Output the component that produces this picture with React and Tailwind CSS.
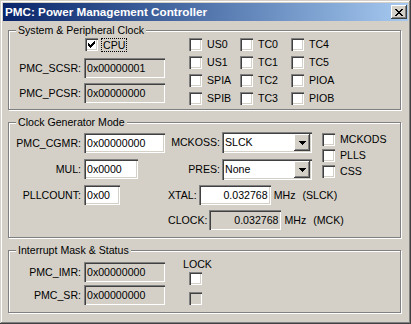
import React from "react";

const SUNKEN =
  "shadow-[inset_1px_1px_0_#808080,inset_2px_2px_0_#404040,inset_-1px_-1px_0_#ffffff,inset_-2px_-2px_0_#d4d0c8]";
const RAISED =
  "shadow-[inset_-1px_-1px_0_#404040,inset_1px_1px_0_#ffffff,inset_-2px_-2px_0_#808080,inset_2px_2px_0_#d4d0c8]";

function CheckMark() {
  return (
    <svg width="7" height="7" viewBox="0 0 7 7" shapeRendering="crispEdges">
      <path
        fill="#000"
        d="M6 0h1v1h-1z M5 1h2v1h-2z M0 2h1v1h-1z M4 2h3v1h-3z M0 3h2v1h-2z M3 3h3v1h-3z M0 4h5v1h-5z M1 5h3v1h-3z M2 6h1v1h-1z"
      />
    </svg>
  );
}

function Check({ checked, disabled }) {
  return (
    <div
      className={`w-[13px] h-[13px] shrink-0 flex items-center justify-center ${SUNKEN} ${
        disabled ? "bg-[#d4d0c8]" : "bg-white"
      }`}
    >
      {checked && <CheckMark />}
    </div>
  );
}

function Field({ w, value, ro, right }) {
  return (
    <div
      className={`${w} h-[20px] shrink-0 flex items-center ${SUNKEN} ${
        ro ? "bg-[#d4d0c8]" : "bg-white"
      } ${right ? "justify-end pr-[3px]" : "pl-[3px]"}`}
    >
      <span className="leading-[13px]">{value}</span>
    </div>
  );
}

function Combo({ value }) {
  return (
    <div className={`w-[90px] h-[21px] shrink-0 bg-white flex items-center pl-[3px] pr-[2px] ${SUNKEN}`}>
      <span className="flex-1 leading-[13px]">{value}</span>
      <div className={`w-[16px] h-[17px] bg-[#d4d0c8] flex items-center justify-center ${RAISED}`}>
        <svg width="7" height="4" viewBox="0 0 7 4" shapeRendering="crispEdges">
          <path fill="#000" d="M0 0h7v1h-7z M1 1h5v1h-5z M2 2h3v1h-3z M3 3h1v1h-1z" />
        </svg>
      </div>
    </div>
  );
}

function CheckItem({ label }) {
  return (
    <div className="h-[13px] flex items-center">
      <Check />
      <span className="ml-[5px] leading-[13px] whitespace-nowrap">{label}</span>
    </div>
  );
}

function Group({ title, h, children }) {
  return (
    <div
      className={`relative ml-[5px] w-[393px] ${h} border border-[#808080] shadow-[inset_1px_1px_0_#ffffff,1px_1px_0_#ffffff]`}
    >
      <span className="absolute left-[7px] top-[-7px] px-[2px] bg-[#d4d0c8] leading-[13px] whitespace-nowrap">
        {title}
      </span>
      {children}
    </div>
  );
}

function LabeledField({ label, labelW, gap, children }) {
  return (
    <div className="h-[20px] flex items-center">
      <span className={`${labelW} ${gap} text-right leading-[13px] whitespace-nowrap`}>{label}</span>
      {children}
    </div>
  );
}

export default function App() {
  return (
    <div
      className={`w-[411px] h-[324px] bg-[#d4d0c8] p-[3px] text-black text-[10.6px] font-['Liberation_Sans',Arial,sans-serif] shadow-[inset_-1px_-1px_0_#404040,inset_1px_1px_0_#d4d0c8,inset_-2px_-2px_0_#808080,inset_2px_2px_0_#ffffff] overflow-hidden`}
    >
      {/* Title bar */}
      <div className="h-[18px] flex items-center pl-[2px] bg-linear-to-r from-[#0a246a] to-[#a6caf0]">
        <span className="text-white font-bold text-[11.7px] leading-[14px] whitespace-nowrap">
          PMC: Power Management Controller
        </span>
        <div className={`ml-auto mr-[1px] w-[16px] h-[14px] bg-[#d4d0c8] flex items-center justify-center ${RAISED}`}>
          <svg width="8" height="7" viewBox="0 0 8 7" shapeRendering="crispEdges">
            <path
              fill="#000"
              d="M0 0h2v1h-2z M6 0h2v1h-2z M1 1h2v1h-2z M5 1h2v1h-2z M2 2h4v1h-4z M3 3h2v1h-2z M2 4h4v1h-4z M1 5h2v1h-2z M5 5h2v1h-2z M0 6h2v1h-2z M6 6h2v1h-2z"
            />
          </svg>
        </div>
      </div>

      {/* Group 1 */}
      <div className="mt-[9px]">
        <Group title="System & Peripheral Clock" h="h-[80px]">
          <div className="flex pt-[7px]">
            <div className="w-[180px] flex flex-col">
              <div className="h-[14px] flex items-start pl-[76px]">
                <Check checked />
                <span className="ml-[3px] h-[14px] px-[1px] border border-dotted border-black flex items-center leading-[12px]">
                  CPU
                </span>
              </div>
              <div className="mt-[6px]">
                <LabeledField label="PMC_SCSR:" labelW="w-[72px]" gap="mr-[3px]">
                  <Field w="w-[81px]" value="0x00000001" ro />
                </LabeledField>
              </div>
              <div className="mt-[5px]">
                <LabeledField label="PMC_PCSR:" labelW="w-[72px]" gap="mr-[3px]">
                  <Field w="w-[81px]" value="0x00000000" ro />
                </LabeledField>
              </div>
            </div>
            <div className="grid grid-cols-[51px_51px_51px] gap-y-[5px]">
              <CheckItem label="US0" />
              <CheckItem label="TC0" />
              <CheckItem label="TC4" />
              <CheckItem label="US1" />
              <CheckItem label="TC1" />
              <CheckItem label="TC5" />
              <CheckItem label="SPIA" />
              <CheckItem label="TC2" />
              <CheckItem label="PIOA" />
              <CheckItem label="SPIB" />
              <CheckItem label="TC3" />
              <CheckItem label="PIOB" />
            </div>
          </div>
        </Group>
      </div>

      {/* Group 2 */}
      <div className="mt-[12px]">
        <Group title="Clock Generator Mode" h="h-[116px]">
          <div className="flex items-start">
            <div className="w-[159px] pt-[10px] flex flex-col gap-[6px]">
              <LabeledField label="PMC_CGMR:" labelW="w-[72px]" gap="mr-[3px]">
                <Field w="w-[81px]" value="0x00000000" />
              </LabeledField>
              <LabeledField label="MUL:" labelW="w-[72px]" gap="mr-[3px]">
                <Field w="w-[54px]" value="0x0000" />
              </LabeledField>
              <LabeledField label="PLLCOUNT:" labelW="w-[72px]" gap="mr-[3px]">
                <Field w="w-[36px]" value="0x00" />
              </LabeledField>
            </div>
            <div className="w-[154px] pt-[9px] flex flex-col">
              <div className="h-[21px] flex items-center">
                <span className="w-[52px] mr-[2px] text-right leading-[13px]">MCKOSS:</span>
                <Combo value="SLCK" />
              </div>
              <div className="mt-[6px] h-[21px] flex items-center">
                <span className="w-[52px] mr-[2px] text-right leading-[13px]">PRES:</span>
                <Combo value="None" />
              </div>
              <div className="mt-[5px]">
                <LabeledField label="XTAL:" labelW="w-[52px]" gap="mr-[2px]">
                  <Field w="w-[72px]" value="0.032768" right />
                  <span className="ml-[3px] leading-[13px]">MHz</span>
                  <span className="ml-[7px] leading-[13px] whitespace-nowrap">(SLCK)</span>
                </LabeledField>
              </div>
              <div className="mt-[5px]">
                <LabeledField label="CLOCK:" labelW="w-[52px]" gap="mr-[2px]">
                  <Field w="w-[72px]" value="0.032768" right ro />
                  <span className="ml-[3px] leading-[13px]">MHz</span>
                  <span className="ml-[7px] leading-[13px] whitespace-nowrap">(MCK)</span>
                </LabeledField>
              </div>
            </div>
            <div className="pt-[10px] flex flex-col gap-[3px]">
              <CheckItem label="MCKODS" />
              <CheckItem label="PLLS" />
              <CheckItem label="CSS" />
            </div>
          </div>
        </Group>
      </div>

      {/* Group 3 */}
      <div className="mt-[12px]">
        <Group title="Interrupt Mask & Status" h="h-[63px]">
          <div className="flex items-start">
            <div className="w-[174px] pt-[11px] flex flex-col gap-[3px]">
              <LabeledField label="PMC_IMR:" labelW="w-[72px]" gap="mr-[3px]">
                <Field w="w-[81px]" value="0x00000000" ro />
              </LabeledField>
              <LabeledField label="PMC_SR:" labelW="w-[72px]" gap="mr-[3px]">
                <Field w="w-[81px]" value="0x00000000" ro />
              </LabeledField>
            </div>
            <div className="pt-[7px] flex flex-col">
              <span className="h-[13px] leading-[13px]">LOCK</span>
              <div className="mt-[1px] ml-[6px]">
                <Check />
              </div>
              <div className="mt-[7px] ml-[6px]">
                <Check disabled />
              </div>
            </div>
          </div>
        </Group>
      </div>
    </div>
  );
}
